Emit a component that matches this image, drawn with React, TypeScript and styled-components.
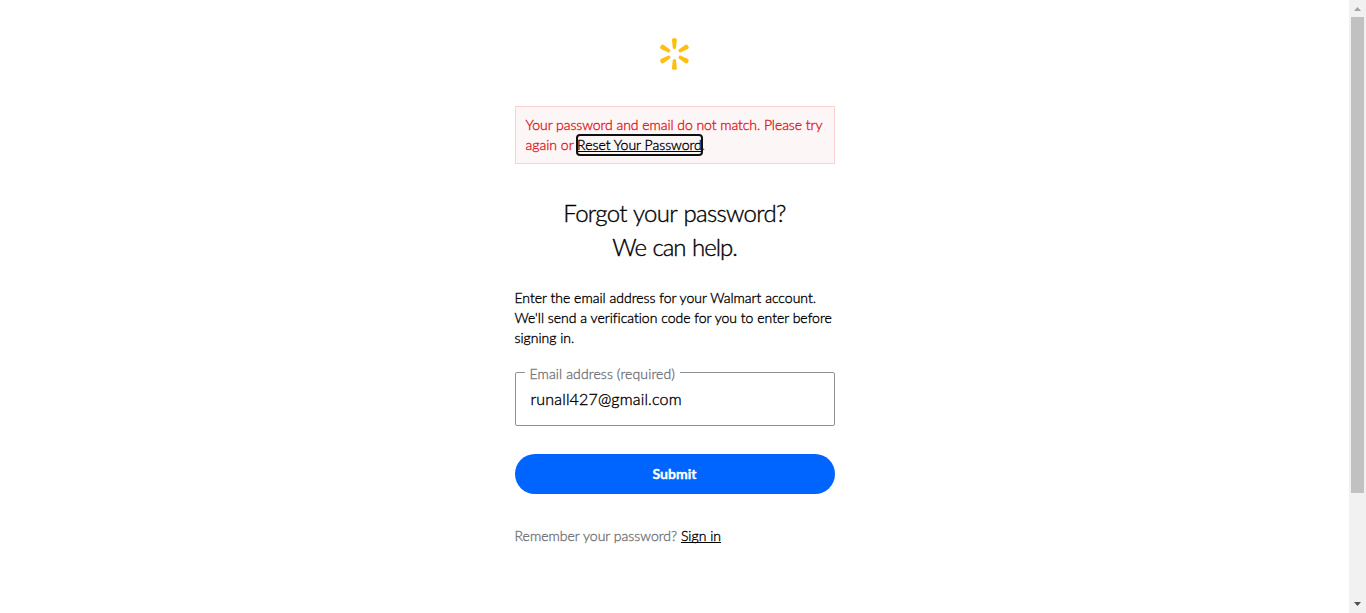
import React from 'react';
import styled, { createGlobalStyle } from 'styled-components';

const GlobalStyle = createGlobalStyle`
  * { box-sizing: border-box; }
  body {
    margin: 0;
    background: #fff;
    color: #000;
    font-family: Lato, "Liberation Sans", sans-serif;
    font-weight: 300;
    font-variant-ligatures: none;
    -webkit-text-stroke-width: 0.35px;
  }
`;

const Page = styled.div`
  display: flex;
  height: 613px;
  overflow: hidden;
`;

const Main = styled.main`
  flex: 1;
  display: flex;
  flex-direction: column;
  align-items: center;
`;

const Column = styled.div`
  width: 320px;
  display: flex;
  flex-direction: column;
  font-size: 14px;
  line-height: 20px;
`;

const Logo = styled.svg`
  display: block;
  align-self: center;
  width: 32px;
  height: 32px;
  margin: 38px 1px 36px 0;
`;

const Line = styled.span<{ $spacing?: number; $wordSpacing?: number }>`
  display: block;
  white-space: nowrap;
  letter-spacing: ${(p) => p.$spacing ?? 0}px;
  word-spacing: ${(p) => p.$wordSpacing ?? 0}px;
`;

const Alert = styled.div`
  height: 58px;
  padding: 8px 10px;
  border: 1px solid #f8d3d4;
  background: #fdf6f6;
  color: #de1c24;
`;

const TextLink = styled.a<{ $focused?: boolean }>`
  color: #000;
  text-decoration: underline;
  text-decoration-thickness: 1px;
  text-decoration-skip-ink: none;
  text-underline-offset: 1px;
  padding: ${(p) => (p.$focused ? '1px 0 2px' : '0')};
  border-radius: 3px;
  outline: ${(p) => (p.$focused ? '2px solid #101010' : 'none')};
  outline-offset: -1px;
`;

const Title = styled.h1`
  margin: 32px 0 0;
  font-size: 24px;
  line-height: 34px;
  font-weight: 300;
  text-align: center;
`;

const Copy = styled.p`
  margin: 24px 0 0;
`;

const Field = styled.fieldset`
  height: 62px;
  min-width: 0;
  margin: 16px 0 0;
  padding: 0 15px 0 10px;
  border: 1px solid #909196;
  border-radius: 2px;
`;

const FieldLabel = styled.legend`
  height: 16px;
  margin: 0 0 0 -1px;
  padding: 0 5px;
  color: #74767c;
`;

const Email = styled.div`
  padding: 9px 0 0 5px;
  font-size: 16px;
`;

const Submit = styled.button`
  height: 40px;
  margin: 28px 0 0;
  padding: 0;
  border: 0;
  border-radius: 20px;
  background: #0064ff;
  color: #fff;
  font: 700 14px/40px Lato, "Liberation Sans", sans-serif;
`;

const Footer = styled.div`
  margin-top: 32px;
  color: #74767c;
`;

const Scrollbar = styled.div`
  width: 17px;
  height: 613px;
  background: #f1f1f1;
  display: flex;
  flex-direction: column;
  align-items: center;
`;

const Thumb = styled.div`
  width: 13px;
  height: 476px;
  background: #c1c1c1;
`;

const Arrow = styled.svg`
  display: block;
  width: 17px;
  height: 17px;
`;

const Spacer = styled.div`
  flex: 1;
`;

export default function App() {
  return (
    <>
      <GlobalStyle />
      <Page>
        <Main>
          <Column>
            <Logo viewBox="-0.4 0 32 32" fill="#ffbf12">
              {[0, 60, 120, 180, 240, 300].map((angle) => (
                <path
                  key={angle}
                  d="M13.5 1.8Q13.5 0 16 0T18.5 1.8L17.6 10Q17.4 11 16 11T14.4 10Z"
                  transform={`rotate(${angle} 16 16)`}
                />
              ))}
            </Logo>
            <Alert>
              <Line $spacing={-0.055}>Your password and email do not match. Please try</Line>
              <Line>
                again or{' '}
                <TextLink $focused>Reset Your Password</TextLink>.
              </Line>
            </Alert>
            <Title>
              <Line $spacing={-0.67} $wordSpacing={1}>Forgot your password?</Line>
              <Line $spacing={-1.02} $wordSpacing={1}>We can help.</Line>
            </Title>
            <Copy>
              <Line>Enter the email address for your Walmart account.</Line>
              <Line>We'll send a verification code for you to enter before</Line>
              <Line>signing in.</Line>
            </Copy>
            <Field>
              <FieldLabel>
                <Line $spacing={0.12}>Email address (required)</Line>
              </FieldLabel>
              <Email>
                <Line $spacing={0.17}>runall427@gmail.com</Line>
              </Email>
            </Field>
            <Submit>Submit</Submit>
            <Footer>
              <Line $spacing={0.015}>
                Remember your password? <TextLink>Sign in</TextLink>
              </Line>
            </Footer>
          </Column>
        </Main>
        <Scrollbar>
          <Arrow viewBox="0 0 17 17" fill="#a3a3a3">
            <path d="M5 11L8.5 7L12 11Z" />
          </Arrow>
          <Thumb />
          <Spacer />
          <Arrow viewBox="0 0 17 17" fill="#505050">
            <path d="M5 6L8.5 10L12 6Z" />
          </Arrow>
        </Scrollbar>
      </Page>
    </>
  );
}
